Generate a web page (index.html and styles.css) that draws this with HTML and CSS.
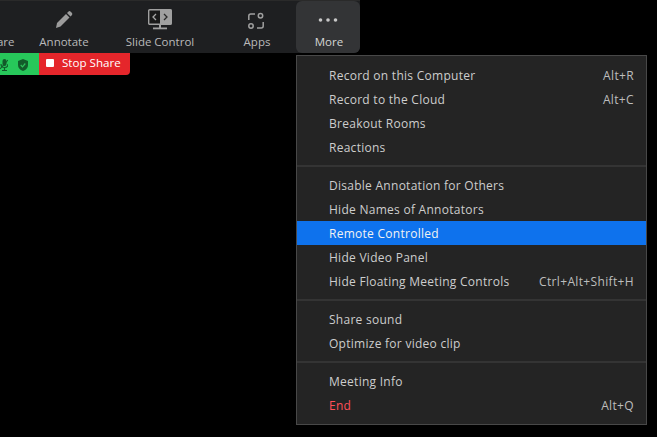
FILE: index.html
```html
<!DOCTYPE html>
<html lang="en">
<head>
<meta charset="utf-8">
<title>Meeting controls</title>
<link rel="stylesheet" href="styles.css">
</head>
<body>
<div class="top">
  <nav class="toolbar">
    <div class="tool tool-share"><span class="tool-icon"></span><span class="tool-label">Share</span></div>
    <div class="tool tool-annotate"><span class="tool-icon">
      <svg width="18" height="18" viewBox="0 0 18 18"><path d="M1 18l1-5L11 4l3.500 3.500-9 9z" fill="#9c9c9c"/><path d="M12 3l1.300-1.300q1.200-1.200 2.400 0l1.100 1.100q1.200 1.200 0 2.400L15.500 6.500z" fill="#9c9c9c"/></svg>
    </span><span class="tool-label">Annotate</span></div>
    <div class="tool tool-wide"><span class="tool-icon">
      <svg width="26" height="22" viewBox="0 0 26 22"><rect x="1.700" y="1.700" width="22.600" height="14.600" rx="1" fill="#1a1a1a" stroke="#a0a0a0" stroke-width="1.400"/><rect x="13" y="1.500" width="11.500" height="15" fill="#a0a0a0"/><path d="M9 6l-3 3 3 3" fill="none" stroke="#a8a8a8" stroke-width="1.300"/><path d="M17 6l3 3-3 3" fill="none" stroke="#2a2a2a" stroke-width="1.300"/><rect x="12" y="17" width="2" height="3" fill="#a0a0a0"/><rect x="6" y="19.500" width="14" height="1.800" fill="#a0a0a0"/></svg>
    </span><span class="tool-label">Slide Control</span></div>
    <div class="tool tool-apps"><span class="tool-icon">
      <svg width="18" height="18" viewBox="0 0 18 18" fill="none" stroke="#a0a0a0" stroke-width="1.500"><path d="M1.800 8V4q0-2 2-2H8"/><path d="M16.200 10V14q0 2-2 2H10"/><circle cx="13.500" cy="3.800" r="2.200"/><circle cx="4" cy="14" r="2.200"/></svg>
    </span><span class="tool-label">Apps</span></div>
    <div class="tool tool-active"><span class="tool-icon">
      <svg width="20" height="4" viewBox="0 0 20 4" fill="#c8c8c8"><circle cx="2.500" cy="2" r="1.800"/><circle cx="10" cy="2" r="1.800"/><circle cx="17.500" cy="2" r="1.800"/></svg>
    </span><span class="tool-label">More</span></div>
  </nav>
  <div class="share-bar">
    <div class="status">
      <svg width="8" height="12" viewBox="0 0 8 12"><path d="M4.500 0q2 0 2 2v3q0 2-2 2t-2-2V2q0-2 2-2z" fill="#125a2a"/><path d="M1 5q0 3.500 3.500 3.500T8 5M4.500 8.500V11M2 11.500h5" stroke="#125a2a" stroke-width="1.200" fill="none"/><path d="M0 10L8 1" stroke="#125a2a" stroke-width="1.100"/></svg>
      <svg width="10" height="12" viewBox="0 0 10 12"><path d="M5 0l5 2v4q0 4-5 6-5-2-5-6V2z" fill="#125c2a"/><path d="M2.700 6l1.800 1.800 2.800-3.300" stroke="#2fc25b" stroke-width="1.200" fill="none"/></svg>
    </div>
    <div class="stop"><span class="stop-square"></span><span>Stop Share</span></div>
  </div>
</div>

<div class="menu">
  <section class="group">
    <div class="item"><span>Record on this Computer</span><span class="key">Alt+R</span></div>
    <div class="item"><span>Record to the Cloud</span><span class="key">Alt+C</span></div>
    <div class="item"><span>Breakout Rooms</span></div>
    <div class="item"><span>Reactions</span></div>
  </section>
  <section class="group">
    <div class="item"><span>Disable Annotation for Others</span></div>
    <div class="item"><span>Hide Names of Annotators</span></div>
    <div class="item item-selected"><span>Remote Controlled</span></div>
    <div class="item"><span>Hide Video Panel</span></div>
    <div class="item"><span>Hide Floating Meeting Controls</span><span class="key">Ctrl+Alt+Shift+H</span></div>
  </section>
  <section class="group">
    <div class="item"><span>Share sound</span></div>
    <div class="item"><span>Optimize for video clip</span></div>
  </section>
  <section class="group">
    <div class="item"><span>Meeting Info</span></div>
    <div class="item item-end"><span class="end-label">End</span><span class="key">Alt+Q</span></div>
  </section>
</div>
</body>
</html>
```
FILE: styles.css
```css
* { box-sizing: border-box; }

html, body {
  margin: 0;
  height: 100%;
  overflow: hidden;
  background: #000;
  font-family: "Open Sans", "Noto Sans", "Liberation Sans", sans-serif;
  font-size: 12px;
}

.top {
  display: flex;
  flex-direction: column;
  align-items: flex-start;
}

.toolbar {
  display: flex;
  width: 360px;
  height: 53px;
  background: #1e1f21;
  border-bottom-right-radius: 6px;
  border-top: 1px solid #2a2a2a;
}

.tool {
  flex: none;
  width: 64px;
  height: 52px;
  display: flex;
  flex-direction: column;
  align-items: center;
  color: #b9b9b9;
}

.tool-share { margin-left: -32px; }
.tool-share .tool-label { padding-right: 2px; }
.tool-wide { width: 128px; }

.tool-icon {
  height: 33px;
  padding-top: 7px;
  display: flex;
  align-items: flex-start;
  justify-content: center;
}

.tool-annotate .tool-icon { padding-top: 9px; }
.tool-apps .tool-icon { padding-top: 11px; }

.tool-label {
  line-height: 16px;
  font-size: 11.5px;
  white-space: nowrap;
}

.tool-apps .tool-label,
.tool-active .tool-label { padding-left: 2px; }

.tool-active {
  margin-left: 8px;
  background: #333436;
  border-radius: 6px;
  color: #d4d4d4;
}

.tool-active .tool-icon { padding-top: 17px; }

.share-bar {
  display: flex;
  height: 22px;
  margin-left: -2px;
}

.status {
  width: 41px;
  display: flex;
  align-items: center;
  justify-content: flex-end;
  gap: 10px;
  padding-top: 2px;
  padding-right: 11px;
  background: #27c75a;
}

.stop {
  width: 91px;
  display: flex;
  align-items: center;
  gap: 8px;
  padding: 0 0 3px 7px;
  background: #e5262b;
  color: #fff;
  font-size: 11.6px;
  border-bottom-right-radius: 4px;
}

.stop-square {
  width: 8px;
  height: 8px;
  border-radius: 1px;
  background: #fff;
}

.menu {
  position: absolute;
  left: 296px;
  top: 55px;
  width: 351px;
  height: 370px;
  padding: 7px 0;
  background: #242424;
  border: 1px solid #484848;
  color: #cdcdcd;
  letter-spacing: .27px;
}

.group + .group {
  margin-top: 6px;
  padding-top: 6px;
  border-top: 2px solid #343434;
}

.item {
  height: 24px;
  display: flex;
  align-items: center;
  justify-content: space-between;
  padding: 0 12px 0 32px;
  white-space: nowrap;
}

.key { color: #bdbdbd; letter-spacing: .35px; }

.item-selected {
  background: #0e72ed;
  color: #f2f2f2;
}

.end-label { color: #ff5058; }
```
